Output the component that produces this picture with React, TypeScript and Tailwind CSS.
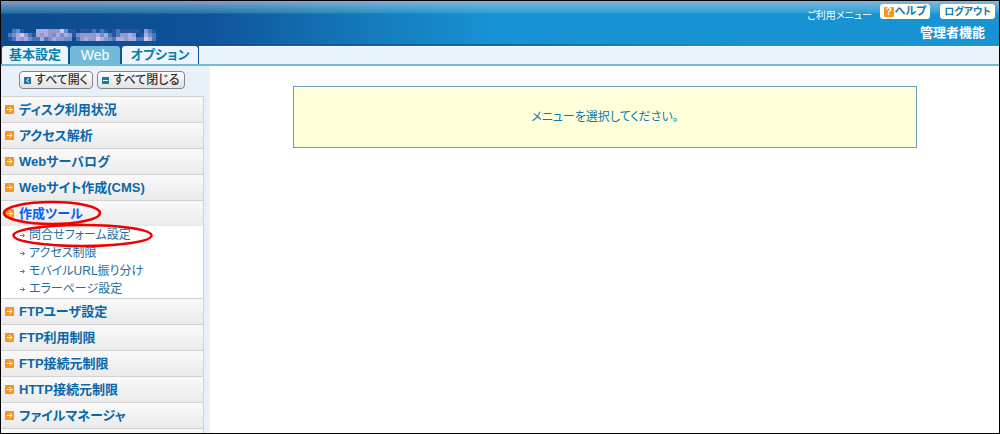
import React from 'react';

const before = ['ディスク利用状況', 'アクセス解析', 'Webサーバログ', 'Webサイト作成(CMS)'];
const tools = ['問合せフォーム設定', 'アクセス制限', 'モバイルURL振り分け', 'エラーページ設定'];
const after = ['FTPユーザ設定', 'FTP利用制限', 'FTP接続元制限', 'HTTP接続元制限', 'ファイルマネージャ', ''];

// Mosaic that hides the account's host name: three rows of 4px cells, each digit
// an index into the shades; a dot leaves the header visible.
const shades = ['#27569f', '#4a76bb', '#6f8fcb', '#9098d0', '#a9abdc', '#cfc9e6'];
const mosaic = [
  '.120...4443335200.0001010.0100000.310',
  '12453104343242430233334241013343.0421',
  '0143421141243322.13433543214434411541',
];

function Arrow() {
  return (
    <svg viewBox="0 0 9 9" className="size-[9px] shrink-0" aria-hidden="true">
      <rect width="9" height="9" rx="1" fill="#f7941e" />
      <path d="M2 4.5H7M4.5 2L7 4.5L4.5 7" fill="none" stroke="#fff" />
    </svg>
  );
}

function Item({ label, active = false }: { label: string; active?: boolean }) {
  return (
    <a
      href="#"
      className={`flex h-[26px] shrink-0 items-center gap-[5px] border-t border-r border-[#d2d2d2] bg-linear-to-b from-[#fafafa] to-[#eaeaea] pl-1 text-[13px] font-bold ${active ? 'text-[#0a5cff]' : 'text-[#0a68aa]'}`}
    >
      <Arrow />
      <span>{label}</span>
    </a>
  );
}

export default function App() {
  return (
    <div className="flex h-screen flex-col overflow-hidden border border-black bg-white font-['Liberation_Sans','Noto_Sans_CJK_JP',sans-serif] [font-feature-settings:'palt']">
      <header className="flex h-[43px] shrink-0 justify-between bg-[linear-gradient(to_bottom,rgba(190,200,225,0.65),rgba(80,200,215,0.3)_12px,transparent_13px),linear-gradient(to_right,#0c4a8e,#0f5299_20%,#1478ba_36%,#1793d4_50%)]">
        <div className="flex items-end pb-[3px] pl-[7px]">
          <svg viewBox="0 0 148 12" className="h-3 w-[148px]" role="img" aria-label="host name">
            {mosaic.flatMap((row, y) =>
              [...row].map((c, x) =>
                c === '.' ? null : <rect key={`${x}-${y}`} x={x * 4} y={y * 4} width="4" height="4" fill={shades[Number(c)]} />,
              ),
            )}
          </svg>
        </div>
        <div className="flex flex-col items-end pt-[3px]">
          <div className="flex items-start">
            <a href="#" className="mr-2 pt-1 text-[10px] leading-4 text-white">ご利用メニュー</a>
            <button type="button" className="mr-2.5 flex h-[15px] w-[50px] items-center justify-center gap-px rounded-[3px] bg-[#fffff4] text-[11px] leading-none font-bold text-[#1779b5]">
              <span className="flex size-[10px] items-center justify-center rounded-[1px] bg-[#f7941e] text-[10px] leading-none text-white">?</span>
              ヘルプ
            </button>
            <button type="button" className="mr-1 flex h-[15px] w-[55px] items-center justify-center rounded-[3px] bg-[#fffff4] text-[10px] leading-none font-bold text-[#1779b5]">ログアウト</button>
          </div>
          <strong className="mr-3.5 text-[13px] leading-[18px] text-white">管理者機能</strong>
        </div>
      </header>
      <div className="h-[2px] shrink-0 bg-[linear-gradient(to_right,#0c4a8e,#0f5299_20%,#1166ac_50%,#1793d4_75%)]" />
      <nav className="flex h-5 shrink-0 border-b-2 border-b-[#72bada] bg-[#e9f1f9] text-[13px] font-bold text-[#087fad]">
        <div className="flex gap-[2px] bg-[#0f5299] px-px">
          <a href="#" className="flex w-[66px] items-center justify-center rounded-t-[3px] bg-[#edf4fb]">基本設定</a>
          <a href="#" className="flex w-[50px] items-center justify-center rounded-t-[3px] bg-[#72bada] text-sm font-normal text-white">Web</a>
          <a href="#" className="flex w-[76px] items-center justify-center rounded-t-[3px] bg-[#edf4fb]">オプション</a>
        </div>
        <div className="flex-1 border-t border-white" />
      </nav>
      <div className="flex min-h-0 flex-1">
        <aside className="w-[209px] shrink-0 overflow-hidden bg-[#e8f1f9] pr-1.5">
          <div className="flex h-[30px] items-center gap-1 pb-[2px] pl-[18px]">
            <button type="button" className="flex h-[18px] w-[74px] items-center justify-center gap-1 rounded-[4px] border border-[#858585] bg-linear-to-b from-white to-[#e2e2e2] text-xs font-medium text-[#333]">
              <svg viewBox="0 0 7 7" className="size-[7px] shrink-0" aria-hidden="true"><path fill="#1a7aa5" d="M0 0h7v7H0z" /><path d="M5 1.5L2.5 3.5L5 5.5" fill="none" stroke="#fff" /></svg>
              すべて開く
            </button>
            <button type="button" className="flex h-[18px] w-[88px] items-center justify-center gap-1 rounded-[4px] border border-[#858585] bg-linear-to-b from-white to-[#e2e2e2] text-xs font-medium text-[#333]">
              <svg viewBox="0 0 7 7" className="size-[7px] shrink-0" aria-hidden="true"><path fill="#1a7aa5" d="M0 0h7v7H0z" /><path d="M1 3.5H6" stroke="#fff" /></svg>
              すべて閉じる
            </button>
          </div>
          <nav className="flex flex-col">
            {before.map((t) => <Item key={t} label={t} />)}
            <div className="relative">
              <Item label="作成ツール" active />
              <ul className="flex h-[72px] flex-col border-r border-[#d2d2d2] bg-white text-xs leading-[18px] text-[#1e6ca0]">
                {tools.map((t) => (
                  <li key={t}>
                    <a href="#" className="flex items-center gap-1 pl-[19px]">
                      <svg viewBox="0 0 5 5" className="size-[5px] shrink-0" aria-hidden="true"><path d="M0 2.5H4.5M2.5 .5L4.5 2.5L2.5 4.5" fill="none" stroke="#1a90c4" /></svg>
                      {t}
                    </a>
                  </li>
                ))}
              </ul>
              <svg viewBox="0 0 160 50" className="pointer-events-none absolute top-0 left-0 h-[50px] w-40" fill="none" stroke="#f00000" strokeWidth="2.5" aria-hidden="true">
                <ellipse cx="51" cy="13" rx="48" ry="11" />
                <ellipse cx="81.5" cy="35.5" rx="69" ry="10.5" />
              </svg>
            </div>
            {after.map((t) => <Item key={t} label={t} />)}
          </nav>
        </aside>
        <main className="min-w-0 flex-1 px-[82px] pt-5">
          <p className="ml-px flex h-[62px] items-center justify-center border border-[#6a9cb5] bg-[#ffffda] text-xs text-[#087bb0]">メニューを選択してください。</p>
        </main>
      </div>
    </div>
  );
}
